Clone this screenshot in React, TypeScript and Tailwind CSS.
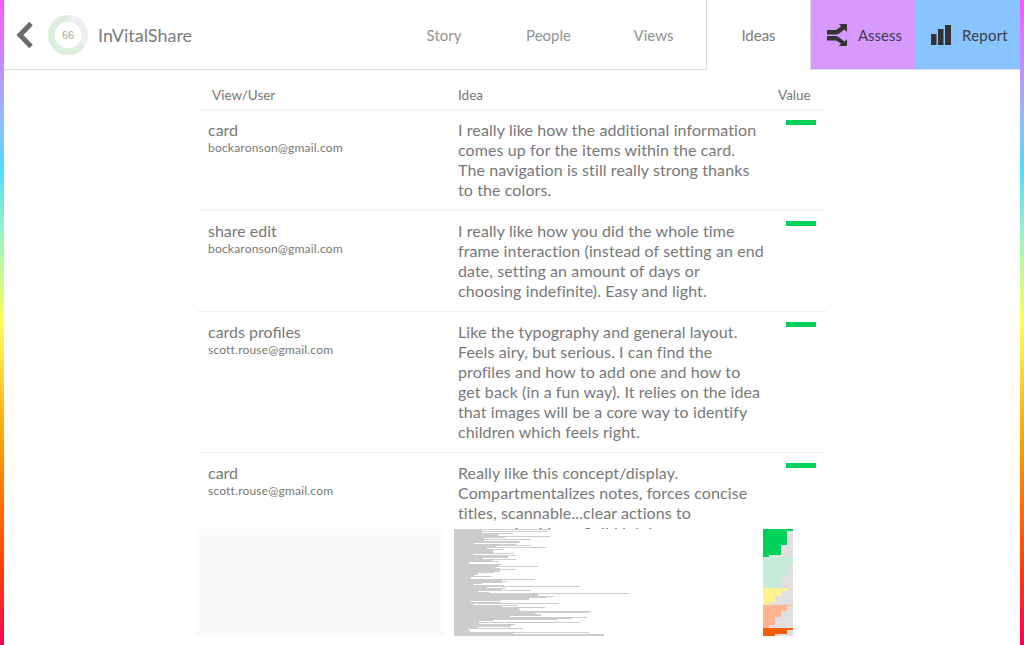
const rows = [
  {
    view: "card",
    user: "bockaronson@gmail.com",
    idea: "I really like how the additional information comes up for the items within the card. The navigation is still really strong thanks to the colors.",
  },
  {
    view: "share edit",
    user: "bockaronson@gmail.com",
    idea: "I really like how you did the whole time frame interaction (instead of setting an end date, setting an amount of days or choosing indefinite). Easy and light.",
  },
  {
    view: "cards profiles",
    user: "scott.rouse@gmail.com",
    idea: "Like the typography and general layout. Feels airy, but serious. I can find the profiles and how to add one and how to get back (in a fun way). It relies on the idea that images will be a core way to identify children which feels right.",
  },
  {
    view: "card",
    user: "scott.rouse@gmail.com",
    idea: "Really like this concept/display. Compartmentalizes notes, forces concise titles, scannable...clear actions to summarize ideas. Solid job here.",
  },
];

// [y, solid width, thin line width] of the idea overview, one entry per line
const ideaLines: [number, number, number][] = [
  [0, 28, 96], [2, 28, 93], [4, 45, 59], [5, 44, 45], [7, 37, 96], [8, 30, 51], [10, 30, 77],
  [12, 17, 66], [13, 20, 65], [15, 18, 62], [16, 42, 76], [18, 33, 92], [20, 39, 49], [22, 39, 39],
  [24, 19, 60], [26, 54, 62], [28, 29, 54], [30, 38, 62], [32, 15, 45], [35, 45, 48], [37, 42, 84],
  [39, 42, 46], [40, 46, 62], [43, 24, 40], [45, 20, 24], [47, 17, 38], [50, 48, 81], [52, 48, 53],
  [54, 19, 28], [56, 33, 50], [57, 33, 126], [59, 48, 52], [61, 24, 77], [63, 28, 35], [64, 84, 176],
  [67, 92, 100], [69, 75, 75], [71, 17, 47], [73, 47, 47], [74, 19, 105], [76, 48, 64], [78, 65, 91],
  [80, 66, 66], [82, 21, 137], [83, 81, 135], [85, 87, 87], [87, 42, 56], [88, 118, 133], [90, 103, 103],
  [91, 25, 39], [93, 25, 126], [95, 30, 61], [96, 57, 57], [98, 24, 24], [99, 14, 69], [101, 16, 16],
  [103, 59, 135], [105, 150, 150],
];

// [y, height, width, colour] of the value overview
const valueSteps: [number, number, number, string][] = [
  [0, 2, 30, "#00d15a"], [2, 14, 24, "#00d15a"], [16, 10, 18, "#00d15a"], [26, 2, 6, "#00d15a"],
  [28, 7, 30, "#c5ecd9"], [35, 12, 24, "#c5ecd9"], [47, 12, 18, "#c5ecd9"],
  [59, 3, 24, "#fff38f"], [62, 5, 18, "#fff38f"], [67, 6, 12, "#fff38f"], [73, 3, 6, "#fff38f"],
  [76, 1, 30, "#ffb48f"], [77, 5, 24, "#ffb48f"], [82, 6, 18, "#ffb48f"], [88, 8, 12, "#ffb48f"], [96, 3, 6, "#ffb48f"],
  [99, 2, 30, "#f55f00"], [101, 4, 24, "#f55f00"], [105, 2, 12, "#f55f00"],
];

function SideStrip() {
  return (
    <div className="w-1 shrink-0 bg-[linear-gradient(to_bottom,#ff55ff_0%,#88c4ff_20%,#4fdcff_26%,#a6f5b8_38%,#ffff55_50%,#ff9900_70%,#ff4400_87%,#ff0055_100%)]" />
  );
}

function ProgressRing() {
  return (
    <svg width="40" height="40" viewBox="0 0 40 40" className="shrink-0">
      <circle cx="20" cy="20" r="16.750" fill="none" stroke="#eeeeee" strokeWidth="6.500" />
      <circle
        cx="20"
        cy="20"
        r="16.750"
        fill="none"
        stroke="#dcefdc"
        strokeWidth="6.500"
        pathLength="100"
        strokeDasharray="66 34"
        transform="rotate(-90 20 20) translate(0 40) scale(1 -1)"
      />
      <text x="20" y="24" textAnchor="middle" fontSize="11" fill="#a8a8a8" fontFamily="Liberation Sans, sans-serif">
        66
      </text>
    </svg>
  );
}

export default function App() {
  return (
    <div className="relative flex h-[645px] w-[1024px] overflow-hidden bg-white font-['Lato',sans-serif] text-[#787878]">
      <SideStrip />
      <div className="flex min-w-0 flex-1 flex-col">
        <header className="flex h-[70px] shrink-0 items-stretch border-b border-[#dddddd]">
          <div className="flex w-[388px] items-center">
            <svg width="18" height="28" viewBox="0 0 18 28" className="ml-3 shrink-0">
              <path d="M15 2.500 L4 14 L15 25.500" fill="none" stroke="#6f6b6b" strokeWidth="5" />
            </svg>
            <div className="ml-3.5">
              <ProgressRing />
            </div>
            <span className="ml-[10px] pt-px text-[18px] text-[#7c7c7c]">InVitalShare</span>
          </div>
          <nav className="flex flex-1 text-[15px] text-[#939393]">
            <div className="flex w-[104px] items-center justify-center pt-px">Story</div>
            <div className="flex w-[105px] items-center justify-center pt-px">People</div>
            <div className="flex w-[105px] items-center justify-center pt-px">Views</div>
            <div className="relative z-10 -mb-px flex w-[105px] items-center justify-center border-x border-[#dddddd] bg-white text-[#7c7c7c]">
              Ideas
            </div>
            <div className="flex w-[104px] items-center justify-center gap-[11px] bg-[#d899ff] pl-[3px] pt-px text-[#3d3d4a]">
              <svg width="20" height="22" viewBox="0 0 20 22" fill="#333333" className="shrink-0">
                <path d="M0 6H9L14 2.500L12 0H20V8L17.500 5.500L11.500 10L9 10.500H0Z" />
                <path d="M0 12H9L11.500 13L17.500 17.500L20 15V22H12L14 19.500L9 16.500H0Z" />
              </svg>
              Assess
            </div>
            <div className="flex flex-1 items-center justify-center gap-[11px] bg-[#88c4ff] pl-1 pt-px text-[#3d3d4a]">
              <svg width="20" height="20" viewBox="0 0 20 20" fill="#333333" className="shrink-0">
                <rect x="0" y="9" width="5.500" height="11" />
                <rect x="7" y="4" width="5.500" height="16" />
                <rect x="14" y="0" width="6" height="20" />
              </svg>
              <span className="tracking-[0.2px]">Report</span>
            </div>
          </nav>
        </header>

        <main className="ml-[194px] w-[628px]">
          <div className="flex h-[40px] items-end border-b border-[#eeeeee] pb-1 text-[13.500px]">
            <div className="w-[260px] pl-3.5">View/User</div>
            <div className="w-[320px]">Idea</div>
            <div>Value</div>
          </div>
          {rows.map((row, i) => (
            <div key={i} className="flex border-b border-[#eeeeee] py-2.5 text-base leading-5">
              <div className="w-[260px] shrink-0 pl-2.5">
                <div>{row.view}</div>
                <div className="text-xs leading-4 tracking-[0.2px]">{row.user}</div>
              </div>
              <div className="w-[306.500px] shrink-0 tracking-[0.1px]">{row.idea}</div>
              <div className="ml-[21.500px] h-[5px] w-[30px] shrink-0 bg-[#00d15a]" />
            </div>
          ))}
        </main>
      </div>
      <SideStrip />

      {/* overview strip lying over the bottom of the table */}
      <div className="absolute bottom-0 left-[196px] flex h-[116px] w-[632px] items-start bg-white">
        <div className="mr-[10px] h-[107px] w-[248px] shrink-0 bg-[#fafafa]" />
        <svg width="309" height="107" className="shrink-0">
          {ideaLines.map(([y, solid, thin], i) => {
            const next = ideaLines[i + 1]?.[0] ?? 107;
            return (
              <g key={i} fill="#cccccc">
                <rect x="0" y={y} width={solid} height={next - y} />
                <rect x="0" y={y} width={thin} height="1" />
              </g>
            );
          })}
        </svg>
        <svg width="30" height="107" className="shrink-0">
          <rect x="0" y="0" width="30" height="107" fill="#e0e0e0" />
          {valueSteps.map(([y, h, w, color], i) => (
            <rect key={i} x="0" y={y} width={w} height={h} fill={color} />
          ))}
        </svg>
      </div>
    </div>
  );
}
